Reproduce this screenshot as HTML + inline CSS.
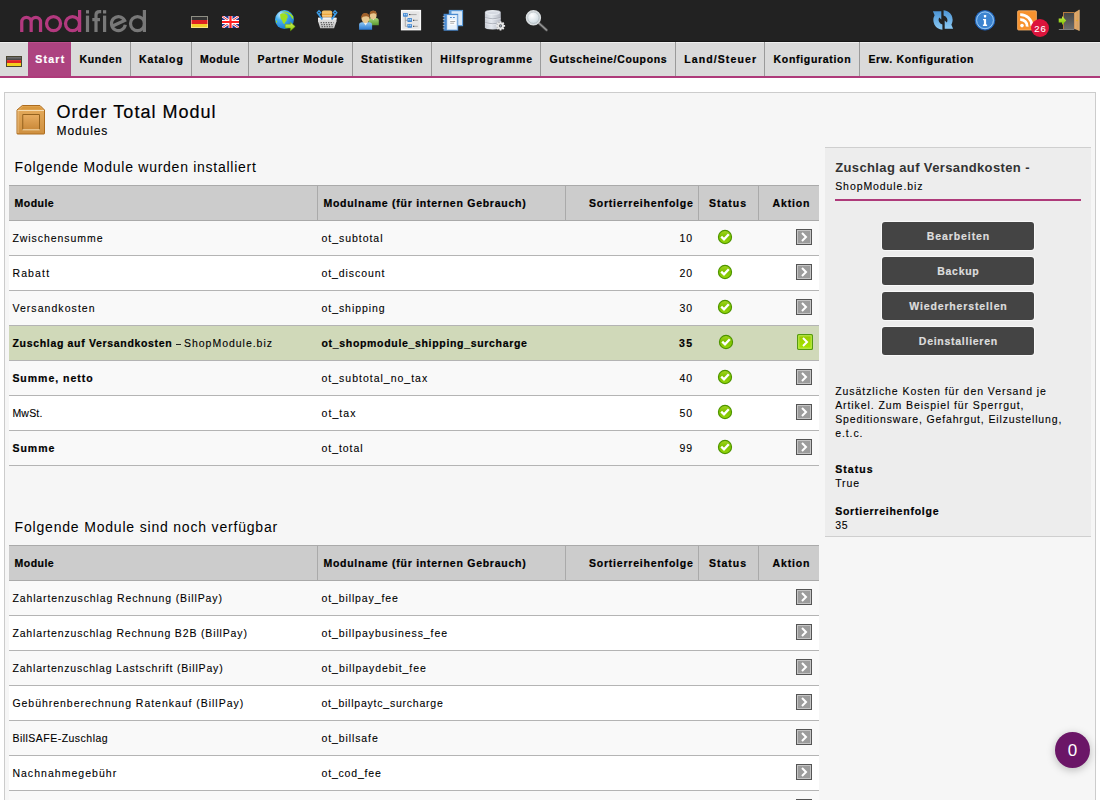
<!DOCTYPE html><html><head><meta charset="utf-8"><style>
html,body{margin:0;padding:0;width:1100px;height:800px;overflow:hidden;background:#fff;font-family:"Liberation Sans",sans-serif;}
.t{position:absolute;white-space:nowrap;}
.r{position:absolute;}
svg{position:absolute;}
</style></head><body>
<div class="r" style="left:0px;top:0px;width:1100px;height:42px;background:#222222;"></div>
<svg style="left:0;top:0" width="160" height="42" viewBox="0 0 160 42">
<g fill="none" stroke="#b3397f" stroke-width="3.25" stroke-linecap="butt">
<path d="M21.75,32 V22 A4.7,4.7 0 0 1 31.15,22 V32 M31.15,22 A4.7,4.7 0 0 1 40.55,22 V32"/>
<circle cx="53.55" cy="23.6" r="7"/>
<circle cx="72.5" cy="23.6" r="7"/>
<path d="M79.6,10 V32"/>
</g>
<g fill="none" stroke="#787878" stroke-width="3.2">
<path d="M87.5,15.6 V32"/><path d="M86,10.2 h3 v3.3 h-3z" fill="#7b7b7b" stroke="none"/>
<path d="M96,32 V15 Q96,11.6 99.5,11.6 H101.2"/><path d="M92.3,19.6 H100"/>
<path d="M104.6,15.6 V32"/><path d="M103,10.2 h3.2 v3.3 h-3.2z" fill="#7b7b7b" stroke="none"/>
<path d="M125.3,24.8 A6.95,6.95 0 1 1 124.6,20.4 L113.2,25.8"/>
<circle cx="137.5" cy="23.6" r="7"/>
<path d="M144.4,10 V32"/>
</g></svg>
<svg style="left:191px;top:16px" width="17" height="12" viewBox="0 0 17 12">
<rect x="0" y="0" width="17" height="4" fill="#333"/><rect x="0" y="4" width="17" height="4" fill="#dd2222"/><rect x="0" y="8" width="17" height="4" fill="#f2cf2a"/>
<rect x="0.5" y="0.5" width="16" height="11" fill="none" stroke="rgba(255,255,230,0.45)" stroke-width="1"/></svg>
<svg style="left:222px;top:16px" width="17" height="12" viewBox="0 0 17 12">
<rect width="17" height="12" fill="#24318f"/>
<path d="M0,0 L17,12 M17,0 L0,12" stroke="#fff" stroke-width="2.6"/>
<path d="M0,0 L17,12 M17,0 L0,12" stroke="#e33" stroke-width="1"/>
<path d="M8.5,0 V12 M0,6 H17" stroke="#fff" stroke-width="4"/>
<path d="M8.5,0 V12 M0,6 H17" stroke="#f22" stroke-width="2.2"/></svg>
<svg style="left:272px;top:7px" width="26" height="26" viewBox="0 0 26 26"><defs><radialGradient id="glb" cx="0.3" cy="0.25" r="0.8"><stop offset="0" stop-color="#c8ecff"/><stop offset="0.35" stop-color="#48b4f4"/><stop offset="1" stop-color="#1a78d0"/></radialGradient>
<linearGradient id="arw" x1="0" y1="0" x2="0" y2="1"><stop offset="0" stop-color="#d4f060"/><stop offset="1" stop-color="#88cc00"/></linearGradient></defs>
<circle cx="12.5" cy="12.6" r="9.5" fill="url(#glb)"/>
<path d="M8,7.6 L10,6.3 L13.6,6.6 L15.4,8.2 L15.8,10.4 L14.8,11.8 L14.6,13.8 L13.2,15.2 L12.6,17 L11,16.2 L10.2,13.8 L8.6,11.6 Z" fill="#9ee020"/>
<path d="M9.6,4.9 Q16,3.3 21.3,9.4 L21.2,12.6 L20.2,11.6 Q18.5,8 15.8,6.6 L12.8,5.6 Z" fill="#9ee020"/>
<path d="M3.8,13.6 L5,13.8 L5.2,15.6 L4.2,15.8 Z" fill="#9ee020"/>
<path d="M13.2,17.3 H18.5 V15.3 L23.2,19.6 L18.5,23.8 V21.1 H13.2 Z" fill="url(#arw)" stroke="#6aa800" stroke-width="0.5"/></svg>
<svg style="left:314px;top:7px" width="26" height="26" viewBox="0 0 26 26"><defs><linearGradient id="bsk" x1="0" y1="0" x2="0" y2="1"><stop offset="0" stop-color="#e6e6e6"/><stop offset="1" stop-color="#c2c2c2"/></linearGradient>
<linearGradient id="itm" x1="0" y1="0" x2="0" y2="1"><stop offset="0" stop-color="#f6c670"/><stop offset="0.55" stop-color="#e9a236"/><stop offset="1" stop-color="#f3c07a"/></linearGradient></defs>
<rect x="7.8" y="3.6" width="10.4" height="7" rx="2" fill="url(#itm)"/>
<path d="M8.3,6 h9.4 M8.3,8.4 h9.4" stroke="#fbe0b0" stroke-width="0.6"/>
<rect x="8.6" y="10.4" width="8.8" height="2.2" fill="#c9ccd6"/>
<path d="M4,10.8 H22.5 V14.2 L20.1,21.3 H6.2 L4,14.2 Z" fill="url(#bsk)"/>
<rect x="4" y="10.8" width="18.5" height="1.6" fill="#f2f2f2"/>
<path d="M6.6,15.6 h13 M7.2,17.6 h12 M7.6,19.6 h11" stroke="#5a5a5a" stroke-width="1.1" stroke-dasharray="1.3,1.2"/>
<path d="M4.2,6.5 L8.3,12.4 M21.8,6.5 L17.7,12.4" stroke="#3d9ee8" stroke-width="1.7"/>
<path d="M3.2,5.7 L5,3.8 L6.6,5.6 L4.9,7.6 Z M22.8,5.7 L21,3.8 L19.4,5.6 L21.1,7.6 Z" fill="none" stroke="#3d9ee8" stroke-width="1.3"/></svg>
<svg style="left:356px;top:7px" width="26" height="26" viewBox="0 0 26 26"><defs><linearGradient id="ub" x1="0" y1="0" x2="0" y2="1"><stop offset="0" stop-color="#8ec8f4"/><stop offset="1" stop-color="#2a78d0"/></linearGradient>
<linearGradient id="ug" x1="0" y1="0" x2="0" y2="1"><stop offset="0" stop-color="#a8d878"/><stop offset="1" stop-color="#5a9a30"/></linearGradient></defs>
<path d="M12.7,18.2 V13.5 Q12.7,11 15.5,11 H20 Q22.8,11 22.8,13.5 V18.2 Z" fill="url(#ug)"/>
<path d="M16,11 L17.3,13.2 L18.6,11 Z" fill="#eee"/>
<ellipse cx="17.2" cy="8" rx="3.4" ry="4.3" fill="#e8c890"/>
<path d="M13.6,8 Q13.3,3.7 17.2,3.7 Q21,3.7 20.8,8.5 Q20,6 17.5,6.2 Q14.5,6.2 13.6,8 Z" fill="#a0602a"/>
<path d="M3.1,22.8 V18 Q3.1,15.3 6,15.3 H13.2 Q16.1,15.3 16.1,18 V22.8 Z" fill="url(#ub)"/>
<path d="M7.4,15.3 L9.6,18.5 L11.8,15.3 Z" fill="#eee"/>
<ellipse cx="9.5" cy="11.3" rx="4" ry="4.8" fill="#e8c890"/>
<path d="M5.2,11.5 Q4.8,5.9 9.5,5.9 Q14,5.9 13.8,12 Q13,9 10,9.2 Q6.5,9.2 5.2,11.5 Z" fill="#a0602a"/></svg>
<svg style="left:398px;top:7px" width="26" height="26" viewBox="0 0 26 26"><rect x="2.9" y="2.9" width="20.2" height="20.5" fill="#f8f8f8"/>
<rect x="4.3" y="4.3" width="17.4" height="17.6" fill="#e6e6e6"/>
<path d="M7.3,9.6 V19.3 H9.6 M7.3,13.3 H9.6" stroke="#9a9a9a" stroke-width="0.8" fill="none"/>
<g fill="#3f84cf"><rect x="5" y="6" width="4.8" height="3.8" rx="0.7"/><rect x="9.4" y="11.1" width="4.6" height="3.9" rx="0.7"/><rect x="9.4" y="16.9" width="4.6" height="3.9" rx="0.7"/></g>
<g fill="#a8d0f4"><rect x="5.9" y="6.7" width="1.3" height="1.6"/><rect x="7.7" y="6.7" width="1.3" height="1.6"/><rect x="10.2" y="11.8" width="1.3" height="1.6"/><rect x="11.9" y="11.8" width="1.3" height="1.6"/><rect x="10.2" y="17.6" width="1.3" height="1.6"/><rect x="11.9" y="17.6" width="1.3" height="1.6"/></g>
<path d="M11,7.6 H18.6 M15,13.3 H19.8 M15,19.3 H19.8" stroke="#8a8a8a" stroke-width="0.7"/>
<path d="M11,7.6 H12.3 M15,13.3 H16.2 M15,19.3 H16.2" stroke="#333" stroke-width="0.9"/></svg>
<svg style="left:440px;top:7px" width="26" height="26" viewBox="0 0 26 26"><rect x="8.8" y="2.9" width="14.3" height="16.3" fill="#5b9ad8"/>
<rect x="11.5" y="4.2" width="10.5" height="13.8" fill="#d8e8f8"/>
<rect x="3.6" y="6.8" width="14.6" height="16.9" fill="#4a8ad0"/>
<rect x="6.8" y="8" width="10.6" height="14.8" fill="#cfe2f6"/>
<rect x="7.8" y="8.6" width="8.6" height="13.4" fill="#e8f2fc"/>
<rect x="9.7" y="13" width="6.1" height="4.8" fill="#fff"/>
<path d="M10.2,14.5 h5 M10.2,16.2 h4" stroke="#888" stroke-width="0.7"/>
<path d="M10,10.5 h1.8 M13,10.5 h1.8" stroke="#4a8ad0" stroke-width="1"/>
<path d="M2.8,9.5 h2 M2.8,12.5 h2 M2.8,15.5 h2 M2.8,18.5 h2 M2.8,21.2 h2" stroke="#bbb" stroke-width="0.8"/></svg>
<svg style="left:481px;top:7px" width="26" height="26" viewBox="0 0 26 26"><defs><linearGradient id="db" x1="0" y1="0" x2="1" y2="0"><stop offset="0" stop-color="#c6cad2"/><stop offset="0.4" stop-color="#e4e8ee"/><stop offset="1" stop-color="#b4b8c2"/></linearGradient></defs>
<path d="M3.9,5.5 Q3.9,3.1 11.85,3.1 Q19.8,3.1 19.8,5.5 V20.2 Q19.8,22.4 11.85,22.4 Q3.9,22.4 3.9,20.2 Z" fill="url(#db)"/>
<ellipse cx="11.85" cy="5.8" rx="6.8" ry="1.8" fill="#d6dae2" stroke="#f4f6fa" stroke-width="0.6"/>
<path d="M4.2,10.8 Q11.85,13 19.5,10.8 M4.2,15.8 Q11.85,18 19.5,15.8" stroke="#9aa0aa" stroke-width="0.8" fill="none"/>
<path d="M4.2,11.6 Q11.85,13.8 19.5,11.6 M4.2,16.6 Q11.85,18.8 19.5,16.6" stroke="#f0f2f6" stroke-width="0.6" fill="none"/>
<g transform="translate(19.5,18.8)"><circle r="3.6" fill="#e8e8e8" stroke="#777" stroke-width="0.5"/>
<path d="M0,-4.6 V4.6 M-4.6,0 H4.6 M-3.25,-3.25 L3.25,3.25 M-3.25,3.25 L3.25,-3.25" stroke="#e8e8e8" stroke-width="1.8"/>
<circle r="1.6" fill="#555"/><circle r="0.9" fill="#9ab"/></g></svg>
<svg style="left:523px;top:7px" width="26" height="26" viewBox="0 0 26 26"><defs><radialGradient id="gls" cx="0.4" cy="0.35" r="0.7"><stop offset="0" stop-color="#ffffff"/><stop offset="1" stop-color="#c4d2da"/></radialGradient></defs>
<path d="M16.3,16.5 L23.5,23" stroke="#555" stroke-width="3" stroke-linecap="round"/>
<path d="M16.3,16.5 L23.5,23" stroke="#999" stroke-width="1.2" stroke-linecap="round"/>
<circle cx="10.4" cy="10.7" r="7" fill="url(#gls)" stroke="#d8dcde" stroke-width="1.4"/>
<circle cx="10.4" cy="10.7" r="5.7" fill="none" stroke="#a8b0b4" stroke-width="0.6"/></svg>
<svg style="left:930px;top:7px" width="26" height="26" viewBox="0 0 26 26"><defs><linearGradient id="rf" x1="0" y1="0" x2="0" y2="1"><stop offset="0" stop-color="#4c94d4"/><stop offset="1" stop-color="#8ccaf4"/></linearGradient></defs>
<path d="M12.4,22.8 A9.8,9.8 0 0 1 4.6,8.2 L2.9,4.3 H11.3 V12.5 L9.2,10.4 A5,5 0 0 0 12.4,17.6 Z" fill="url(#rf)"/>
<path d="M13.6,3.2 A9.8,9.8 0 0 1 21.4,17.8 L23.1,21.7 H14.7 V13.5 L16.8,15.6 A5,5 0 0 0 13.6,8.4 Z" fill="url(#rf)"/></svg>
<svg style="left:972px;top:7px" width="26" height="26" viewBox="0 0 26 26"><circle cx="13" cy="13.3" r="9.8" fill="#3c84d0" stroke="#1d5fb8" stroke-width="0.9"/>
<circle cx="13" cy="13.3" r="8.4" fill="none" stroke="#9ccaf2" stroke-width="1"/>
<rect x="11.9" y="8" width="2.3" height="2.4" rx="0.6" fill="#fff"/>
<path d="M11,12 H14.1 V17.5 H15.1 V19 H10.9 V17.5 H11.9 V13.3 H11 Z" fill="#fff"/></svg>
<svg style="left:1014px;top:7px" width="26" height="26" viewBox="0 0 26 26"><rect x="3.6" y="3.8" width="18.8" height="19.2" rx="1" fill="#f7922e" stroke="#fbb46a" stroke-width="0.8"/>
<circle cx="8" cy="18.6" r="1.8" fill="#fff"/>
<path d="M6.2,12.6 A6.6,6.6 0 0 1 13.2,19.6 M6.2,7.6 A11.6,11.6 0 0 1 18,19" stroke="#fff" stroke-width="2.8" fill="none"/></svg>
<div class="r" style="left:1031px;top:19px;width:18px;height:18px;border-radius:50%;background:#dc143c;"></div>
<div class="t" style="left:1030.0px;width:20px;text-align:center;text-indent:0.9px;top:23.96px;font-size:9.5px;line-height:9.5px;letter-spacing:0.9px;color:#fff;-webkit-text-stroke:0.1px #fff;">26</div>
<svg style="left:1055px;top:7px" width="26" height="26" viewBox="0 0 26 26"><defs><linearGradient id="dr" x1="0" y1="0" x2="0" y2="1"><stop offset="0" stop-color="#464646"/><stop offset="1" stop-color="#6c6c6c"/></linearGradient>
<linearGradient id="dp" x1="0" y1="0" x2="1" y2="0"><stop offset="0" stop-color="#c89058"/><stop offset="0.3" stop-color="#e0aa6c"/><stop offset="1" stop-color="#d49a5a"/></linearGradient>
<linearGradient id="ar2" x1="0" y1="0" x2="0" y2="1"><stop offset="0" stop-color="#c8f048"/><stop offset="1" stop-color="#78c000"/></linearGradient></defs>
<rect x="3.8" y="22" width="15.5" height="0.9" fill="#8a8a8a"/>
<rect x="8" y="5" width="11.2" height="17" fill="#b47a40"/>
<rect x="9" y="6" width="10" height="16" fill="url(#dr)"/>
<path d="M19,5.8 L24.2,2.8 V23.8 L19,21.8 Z" fill="url(#dp)"/>
<path d="M24.2,2.8 V23.8" stroke="#f0c890" stroke-width="0.8"/>
<circle cx="22" cy="13.5" r="0.8" fill="#e8b020"/>
<path d="M3.7,11.4 H7 V9.1 L11.2,13.5 L7,17.9 V15.6 H3.7 Z" fill="url(#ar2)"/></svg>
<div class="r" style="left:0px;top:42px;width:1100px;height:34px;background:#dadada;"></div>
<div class="r" style="left:0px;top:41px;width:1100px;height:1px;background:#161616;"></div>
<div class="r" style="left:0px;top:42px;width:1100px;height:1px;background:#eeeeee;"></div>
<div class="r" style="left:0px;top:76px;width:1100px;height:2px;background:#ae3a7a;"></div>
<div class="r" style="left:28px;top:42px;width:43px;height:34px;background:#ad4380;"></div>
<div class="r" style="left:28px;top:42px;width:43px;height:1px;background:#bd4f8d;"></div>
<svg style="left:6px;top:56px" width="16" height="11" viewBox="0 0 16 11">
<defs><linearGradient id="nfg" x1="0" y1="0" x2="0" y2="1"><stop offset="0" stop-color="#fff" stop-opacity="0.35"/><stop offset="0.5" stop-color="#fff" stop-opacity="0"/></linearGradient></defs>
<rect x="0" y="0" width="16" height="11" fill="#4a4632"/>
<rect x="1" y="1" width="14" height="3" fill="#2a2a2a"/><rect x="1" y="4" width="14" height="3" fill="#e02424"/><rect x="1" y="7" width="14" height="3" fill="#f2d020"/>
<rect x="1" y="1" width="14" height="9" fill="url(#nfg)"/></svg>
<div class="r" style="left:130px;top:42px;width:1px;height:34px;background:#9a9a9a;"></div>
<div class="r" style="left:191px;top:42px;width:1px;height:34px;background:#9a9a9a;"></div>
<div class="r" style="left:248px;top:42px;width:1px;height:34px;background:#9a9a9a;"></div>
<div class="r" style="left:352px;top:42px;width:1px;height:34px;background:#9a9a9a;"></div>
<div class="r" style="left:431px;top:42px;width:1px;height:34px;background:#9a9a9a;"></div>
<div class="r" style="left:540px;top:42px;width:1px;height:34px;background:#9a9a9a;"></div>
<div class="r" style="left:675px;top:42px;width:1px;height:34px;background:#9a9a9a;"></div>
<div class="r" style="left:764px;top:42px;width:1px;height:34px;background:#9a9a9a;"></div>
<div class="r" style="left:859px;top:42px;width:1px;height:34px;background:#9a9a9a;"></div>
<div class="t" style="left:35.20px;top:54.11px;font-size:10.5px;line-height:10.5px;letter-spacing:1.27px;color:#fff;font-weight:bold;-webkit-text-stroke:0.2px #fff;">Start</div>
<div class="t" style="left:79.50px;top:54.11px;font-size:10.5px;line-height:10.5px;letter-spacing:0.624px;color:#000;font-weight:bold;-webkit-text-stroke:0.2px #000;">Kunden</div>
<div class="t" style="left:139.00px;top:54.11px;font-size:10.5px;line-height:10.5px;letter-spacing:0.883px;color:#000;font-weight:bold;-webkit-text-stroke:0.2px #000;">Katalog</div>
<div class="t" style="left:200.00px;top:54.11px;font-size:10.5px;line-height:10.5px;letter-spacing:0.552px;color:#000;font-weight:bold;-webkit-text-stroke:0.2px #000;">Module</div>
<div class="t" style="left:257.50px;top:54.11px;font-size:10.5px;line-height:10.5px;letter-spacing:0.752px;color:#000;font-weight:bold;-webkit-text-stroke:0.2px #000;">Partner Module</div>
<div class="t" style="left:361.00px;top:54.11px;font-size:10.5px;line-height:10.5px;letter-spacing:0.84px;color:#000;font-weight:bold;-webkit-text-stroke:0.2px #000;">Statistiken</div>
<div class="t" style="left:440.20px;top:54.11px;font-size:10.5px;line-height:10.5px;letter-spacing:0.868px;color:#000;font-weight:bold;-webkit-text-stroke:0.2px #000;">Hilfsprogramme</div>
<div class="t" style="left:549.60px;top:54.11px;font-size:10.5px;line-height:10.5px;letter-spacing:0.677px;color:#000;font-weight:bold;-webkit-text-stroke:0.2px #000;">Gutscheine/Coupons</div>
<div class="t" style="left:684.20px;top:54.11px;font-size:10.5px;line-height:10.5px;letter-spacing:1.112px;color:#000;font-weight:bold;-webkit-text-stroke:0.2px #000;">Land/Steuer</div>
<div class="t" style="left:773.60px;top:54.11px;font-size:10.5px;line-height:10.5px;letter-spacing:0.682px;color:#000;font-weight:bold;-webkit-text-stroke:0.2px #000;">Konfiguration</div>
<div class="t" style="left:868.40px;top:54.11px;font-size:10.5px;line-height:10.5px;letter-spacing:0.675px;color:#000;font-weight:bold;-webkit-text-stroke:0.2px #000;">Erw. Konfiguration</div>
<div class="r" style="left:4px;top:92px;width:1092px;height:708px;background:#f6f6f6;border:1px solid #cccccc;box-sizing:border-box;height:720px;"></div>
<svg style="left:16px;top:103px" width="32" height="34" viewBox="0 0 32 34">
<defs><linearGradient id="bx" x1="0" y1="0" x2="0" y2="1"><stop offset="0" stop-color="#e6ad5e"/><stop offset="1" stop-color="#cf9040"/></linearGradient>
<linearGradient id="bx2" x1="0" y1="0" x2="0" y2="1"><stop offset="0" stop-color="#e9ae62"/><stop offset="1" stop-color="#c98838"/></linearGradient></defs>
<path d="M6.3,2.5 H24 L28.5,7 V30.5 Q28.5,31 28,31 H1.5 Q1,31 1,30.5 V7 Z" fill="url(#bx)" stroke="#ad6c1e" stroke-width="1"/>
<path d="M7,3.5 H23.3 L26.5,6.5 H4 Z" fill="#d8983e"/>
<path d="M1.5,7.5 H28" stroke="#f6dcb0" stroke-width="1"/>
<path d="M2,8 V30" stroke="#f0c890" stroke-width="0.8"/>
<rect x="6.25" y="11" width="17.75" height="16" fill="url(#bx2)"/>
<path d="M6.75,27 V11.5 H23.5 V27" fill="none" stroke="#94621e" stroke-width="1"/>
<path d="M6.5,26.8 H23.75" stroke="#f6dcb0" stroke-width="1"/>
</svg>
<div class="t" style="left:56.50px;top:103.16px;font-size:18px;line-height:18px;letter-spacing:1.023px;color:#000;-webkit-text-stroke:0.2px #000;">Order Total Modul</div>
<div class="t" style="left:56.50px;top:125.04px;font-size:12px;line-height:12px;letter-spacing:0.907px;color:#000;-webkit-text-stroke:0.15px #000;">Modules</div>
<div class="t" style="left:14.60px;top:160.15px;font-size:14px;line-height:14px;letter-spacing:0.73px;color:#000;">Folgende Module wurden installiert</div>
<div class="r" style="left:9px;top:185px;width:810px;height:1px;background:#aaaaaa;"></div>
<div class="r" style="left:9px;top:186px;width:810px;height:34px;background:#cccccc;"></div>
<div class="r" style="left:9px;top:220px;width:810px;height:1px;background:#aaaaaa;"></div>
<div class="r" style="left:317px;top:186px;width:1px;height:34px;background:#aaaaaa;"></div>
<div class="r" style="left:565px;top:186px;width:1px;height:34px;background:#aaaaaa;"></div>
<div class="r" style="left:698px;top:186px;width:1px;height:34px;background:#aaaaaa;"></div>
<div class="r" style="left:758px;top:186px;width:1px;height:34px;background:#aaaaaa;"></div>
<div class="t" style="left:14.60px;top:198.11px;font-size:10.5px;line-height:10.5px;letter-spacing:0.452px;color:#000;font-weight:bold;-webkit-text-stroke:0.2px #000;">Module</div>
<div class="t" style="left:323.40px;top:198.11px;font-size:10.5px;line-height:10.5px;letter-spacing:0.743px;color:#000;font-weight:bold;-webkit-text-stroke:0.2px #000;">Modulname (für internen Gebrauch)</div>
<div class="t" style="right:406.30px;top:198.11px;font-size:10.5px;line-height:10.5px;letter-spacing:0.798px;color:#000;font-weight:bold;-webkit-text-stroke:0.2px #000;">Sortierreihenfolge</div>
<div class="t" style="left:709.00px;top:198.11px;font-size:10.5px;line-height:10.5px;letter-spacing:0.982px;color:#000;font-weight:bold;-webkit-text-stroke:0.2px #000;">Status</div>
<div class="t" style="right:289.65px;top:198.11px;font-size:10.5px;line-height:10.5px;letter-spacing:0.848px;color:#000;font-weight:bold;-webkit-text-stroke:0.2px #000;">Aktion</div>
<div class="r" style="left:9px;top:221px;width:810px;height:34px;background:#f9f9f9;"></div>
<div class="r" style="left:9px;top:255px;width:810px;height:1px;background:#b4b4b4;"></div>
<div class="t" style="left:12.40px;top:233.11px;font-size:10.5px;line-height:10.5px;letter-spacing:0.953px;color:#000;-webkit-text-stroke:0.1px #000;">Zwischensumme</div>
<div class="t" style="left:321.50px;top:233.11px;font-size:10.5px;line-height:10.5px;letter-spacing:0.963px;color:#000;-webkit-text-stroke:0.1px #000;">ot_subtotal</div>
<div class="t" style="right:407.08px;top:233.11px;font-size:10.5px;line-height:10.5px;letter-spacing:0.92px;color:#000;-webkit-text-stroke:0.1px #000;">10</div>
<svg style="left:717px;top:229px" width="16" height="16" viewBox="0 0 16 16">
<defs><linearGradient id="g1850" x1="0" y1="0" x2="0" y2="1"><stop offset="0" stop-color="#a6d822"/><stop offset="0.45" stop-color="#7cc000"/><stop offset="1" stop-color="#96d80a"/></linearGradient></defs>
<circle cx="8" cy="8" r="6.6" fill="url(#g1850)" stroke="#4e9400" stroke-width="1.1"/>
<path d="M4.2,7.6 L7,10.3 L11.8,5.2" fill="none" stroke="#fff" stroke-width="2.4"/></svg>
<svg style="left:796px;top:229px" width="16" height="16" viewBox="0 0 16 16">
<rect x="0.5" y="0.5" width="15" height="15" fill="#9c9c9c" stroke="#555" stroke-width="1"/>
<rect x="1.5" y="1.5" width="13" height="13" fill="none" stroke="#c4c4c4" stroke-width="1"/>
<path d="M6,4 L10,8 L6,12" fill="none" stroke="#fff" stroke-width="2"/></svg>
<div class="r" style="left:9px;top:256px;width:810px;height:34px;background:#ffffff;"></div>
<div class="r" style="left:9px;top:290px;width:810px;height:1px;background:#b4b4b4;"></div>
<div class="t" style="left:12.40px;top:268.11px;font-size:10.5px;line-height:10.5px;letter-spacing:1.152px;color:#000;-webkit-text-stroke:0.1px #000;">Rabatt</div>
<div class="t" style="left:321.50px;top:268.11px;font-size:10.5px;line-height:10.5px;letter-spacing:0.91px;color:#000;-webkit-text-stroke:0.1px #000;">ot_discount</div>
<div class="t" style="right:407.08px;top:268.11px;font-size:10.5px;line-height:10.5px;letter-spacing:0.92px;color:#000;-webkit-text-stroke:0.1px #000;">20</div>
<svg style="left:717px;top:264px" width="16" height="16" viewBox="0 0 16 16">
<defs><linearGradient id="g1851" x1="0" y1="0" x2="0" y2="1"><stop offset="0" stop-color="#a6d822"/><stop offset="0.45" stop-color="#7cc000"/><stop offset="1" stop-color="#96d80a"/></linearGradient></defs>
<circle cx="8" cy="8" r="6.6" fill="url(#g1851)" stroke="#4e9400" stroke-width="1.1"/>
<path d="M4.2,7.6 L7,10.3 L11.8,5.2" fill="none" stroke="#fff" stroke-width="2.4"/></svg>
<svg style="left:796px;top:264px" width="16" height="16" viewBox="0 0 16 16">
<rect x="0.5" y="0.5" width="15" height="15" fill="#9c9c9c" stroke="#555" stroke-width="1"/>
<rect x="1.5" y="1.5" width="13" height="13" fill="none" stroke="#c4c4c4" stroke-width="1"/>
<path d="M6,4 L10,8 L6,12" fill="none" stroke="#fff" stroke-width="2"/></svg>
<div class="r" style="left:9px;top:291px;width:810px;height:34px;background:#f9f9f9;"></div>
<div class="r" style="left:9px;top:325px;width:810px;height:1px;background:#b4b4b4;"></div>
<div class="t" style="left:12.40px;top:303.11px;font-size:10.5px;line-height:10.5px;letter-spacing:1.062px;color:#000;-webkit-text-stroke:0.1px #000;">Versandkosten</div>
<div class="t" style="left:321.50px;top:303.11px;font-size:10.5px;line-height:10.5px;letter-spacing:0.939px;color:#000;-webkit-text-stroke:0.1px #000;">ot_shipping</div>
<div class="t" style="right:407.08px;top:303.11px;font-size:10.5px;line-height:10.5px;letter-spacing:0.92px;color:#000;-webkit-text-stroke:0.1px #000;">30</div>
<svg style="left:717px;top:299px" width="16" height="16" viewBox="0 0 16 16">
<defs><linearGradient id="g1852" x1="0" y1="0" x2="0" y2="1"><stop offset="0" stop-color="#a6d822"/><stop offset="0.45" stop-color="#7cc000"/><stop offset="1" stop-color="#96d80a"/></linearGradient></defs>
<circle cx="8" cy="8" r="6.6" fill="url(#g1852)" stroke="#4e9400" stroke-width="1.1"/>
<path d="M4.2,7.6 L7,10.3 L11.8,5.2" fill="none" stroke="#fff" stroke-width="2.4"/></svg>
<svg style="left:796px;top:299px" width="16" height="16" viewBox="0 0 16 16">
<rect x="0.5" y="0.5" width="15" height="15" fill="#9c9c9c" stroke="#555" stroke-width="1"/>
<rect x="1.5" y="1.5" width="13" height="13" fill="none" stroke="#c4c4c4" stroke-width="1"/>
<path d="M6,4 L10,8 L6,12" fill="none" stroke="#fff" stroke-width="2"/></svg>
<div class="r" style="left:9px;top:326px;width:810px;height:34px;background:#d0d9b9;"></div>
<div class="r" style="left:9px;top:360px;width:810px;height:1px;background:#b4b4b4;"></div>
<div class="t" style="left:12.50px;top:338.11px;font-size:10.5px;line-height:10.5px;letter-spacing:0.673px;color:#000;font-weight:bold;-webkit-text-stroke:0.2px #000;">Zuschlag auf Versandkosten</div>
<div class="t" style="left:184.00px;top:338.11px;font-size:10.5px;line-height:10.5px;letter-spacing:0.977px;color:#000;-webkit-text-stroke:0.1px #000;">ShopModule.biz</div>
<div class="t" style="left:321.50px;top:338.11px;font-size:10.5px;line-height:10.5px;letter-spacing:0.679px;color:#000;font-weight:bold;-webkit-text-stroke:0.2px #000;">ot_shopmodule_shipping_surcharge</div>
<div class="r" style="left:176px;top:344px;width:5px;height:1.2px;background:#222;"></div>
<div class="t" style="right:406.68px;top:338.11px;font-size:10.5px;line-height:10.5px;letter-spacing:1.32px;color:#000;font-weight:bold;-webkit-text-stroke:0.2px #000;">35</div>
<svg style="left:718px;top:334px" width="16" height="16" viewBox="0 0 16 16">
<defs><linearGradient id="g1853" x1="0" y1="0" x2="0" y2="1"><stop offset="0" stop-color="#a6d822"/><stop offset="0.45" stop-color="#7cc000"/><stop offset="1" stop-color="#96d80a"/></linearGradient></defs>
<circle cx="8" cy="8" r="6.6" fill="url(#g1853)" stroke="#4e9400" stroke-width="1.1"/>
<path d="M4.2,7.6 L7,10.3 L11.8,5.2" fill="none" stroke="#fff" stroke-width="2.4"/></svg>
<svg style="left:797px;top:334px" width="16" height="16" viewBox="0 0 16 16">
<defs><linearGradient id="gb1853" x1="0" y1="0" x2="0" y2="1"><stop offset="0" stop-color="#98c800"/><stop offset="1" stop-color="#a8e800"/></linearGradient></defs>
<rect x="0.6" y="0.6" width="14.8" height="14.8" rx="1" fill="url(#gb1853)" stroke="#559a10" stroke-width="1.2"/>
<rect x="1.8" y="1.8" width="12.4" height="12.4" fill="none" stroke="#c4ee60" stroke-width="0.9"/>
<path d="M6,4 L10,8 L6,12" fill="none" stroke="#fff" stroke-width="2"/></svg>
<div class="r" style="left:9px;top:361px;width:810px;height:34px;background:#f9f9f9;"></div>
<div class="r" style="left:9px;top:395px;width:810px;height:1px;background:#b4b4b4;"></div>
<div class="t" style="left:12.40px;top:373.11px;font-size:10.5px;line-height:10.5px;letter-spacing:0.98px;color:#000;font-weight:bold;-webkit-text-stroke:0.2px #000;">Summe, netto</div>
<div class="t" style="left:321.50px;top:373.11px;font-size:10.5px;line-height:10.5px;letter-spacing:0.998px;color:#000;-webkit-text-stroke:0.1px #000;">ot_subtotal_no_tax</div>
<div class="t" style="right:407.08px;top:373.11px;font-size:10.5px;line-height:10.5px;letter-spacing:0.92px;color:#000;-webkit-text-stroke:0.1px #000;">40</div>
<svg style="left:717px;top:369px" width="16" height="16" viewBox="0 0 16 16">
<defs><linearGradient id="g1854" x1="0" y1="0" x2="0" y2="1"><stop offset="0" stop-color="#a6d822"/><stop offset="0.45" stop-color="#7cc000"/><stop offset="1" stop-color="#96d80a"/></linearGradient></defs>
<circle cx="8" cy="8" r="6.6" fill="url(#g1854)" stroke="#4e9400" stroke-width="1.1"/>
<path d="M4.2,7.6 L7,10.3 L11.8,5.2" fill="none" stroke="#fff" stroke-width="2.4"/></svg>
<svg style="left:796px;top:369px" width="16" height="16" viewBox="0 0 16 16">
<rect x="0.5" y="0.5" width="15" height="15" fill="#9c9c9c" stroke="#555" stroke-width="1"/>
<rect x="1.5" y="1.5" width="13" height="13" fill="none" stroke="#c4c4c4" stroke-width="1"/>
<path d="M6,4 L10,8 L6,12" fill="none" stroke="#fff" stroke-width="2"/></svg>
<div class="r" style="left:9px;top:396px;width:810px;height:34px;background:#ffffff;"></div>
<div class="r" style="left:9px;top:430px;width:810px;height:1px;background:#b4b4b4;"></div>
<div class="t" style="left:12.40px;top:408.11px;font-size:10.5px;line-height:10.5px;letter-spacing:0.207px;color:#000;-webkit-text-stroke:0.1px #000;">MwSt.</div>
<div class="t" style="left:321.50px;top:408.11px;font-size:10.5px;line-height:10.5px;letter-spacing:1.08px;color:#000;-webkit-text-stroke:0.1px #000;">ot_tax</div>
<div class="t" style="right:407.08px;top:408.11px;font-size:10.5px;line-height:10.5px;letter-spacing:0.92px;color:#000;-webkit-text-stroke:0.1px #000;">50</div>
<svg style="left:717px;top:404px" width="16" height="16" viewBox="0 0 16 16">
<defs><linearGradient id="g1855" x1="0" y1="0" x2="0" y2="1"><stop offset="0" stop-color="#a6d822"/><stop offset="0.45" stop-color="#7cc000"/><stop offset="1" stop-color="#96d80a"/></linearGradient></defs>
<circle cx="8" cy="8" r="6.6" fill="url(#g1855)" stroke="#4e9400" stroke-width="1.1"/>
<path d="M4.2,7.6 L7,10.3 L11.8,5.2" fill="none" stroke="#fff" stroke-width="2.4"/></svg>
<svg style="left:796px;top:404px" width="16" height="16" viewBox="0 0 16 16">
<rect x="0.5" y="0.5" width="15" height="15" fill="#9c9c9c" stroke="#555" stroke-width="1"/>
<rect x="1.5" y="1.5" width="13" height="13" fill="none" stroke="#c4c4c4" stroke-width="1"/>
<path d="M6,4 L10,8 L6,12" fill="none" stroke="#fff" stroke-width="2"/></svg>
<div class="r" style="left:9px;top:431px;width:810px;height:34px;background:#f9f9f9;"></div>
<div class="r" style="left:9px;top:465px;width:810px;height:1px;background:#b4b4b4;"></div>
<div class="t" style="left:12.40px;top:443.11px;font-size:10.5px;line-height:10.5px;letter-spacing:1.018px;color:#000;font-weight:bold;-webkit-text-stroke:0.2px #000;">Summe</div>
<div class="t" style="left:321.50px;top:443.11px;font-size:10.5px;line-height:10.5px;letter-spacing:0.951px;color:#000;-webkit-text-stroke:0.1px #000;">ot_total</div>
<div class="t" style="right:407.08px;top:443.11px;font-size:10.5px;line-height:10.5px;letter-spacing:0.92px;color:#000;-webkit-text-stroke:0.1px #000;">99</div>
<svg style="left:717px;top:439px" width="16" height="16" viewBox="0 0 16 16">
<defs><linearGradient id="g1856" x1="0" y1="0" x2="0" y2="1"><stop offset="0" stop-color="#a6d822"/><stop offset="0.45" stop-color="#7cc000"/><stop offset="1" stop-color="#96d80a"/></linearGradient></defs>
<circle cx="8" cy="8" r="6.6" fill="url(#g1856)" stroke="#4e9400" stroke-width="1.1"/>
<path d="M4.2,7.6 L7,10.3 L11.8,5.2" fill="none" stroke="#fff" stroke-width="2.4"/></svg>
<svg style="left:796px;top:439px" width="16" height="16" viewBox="0 0 16 16">
<rect x="0.5" y="0.5" width="15" height="15" fill="#9c9c9c" stroke="#555" stroke-width="1"/>
<rect x="1.5" y="1.5" width="13" height="13" fill="none" stroke="#c4c4c4" stroke-width="1"/>
<path d="M6,4 L10,8 L6,12" fill="none" stroke="#fff" stroke-width="2"/></svg>
<div class="t" style="left:14.60px;top:520.15px;font-size:14px;line-height:14px;letter-spacing:0.811px;color:#000;">Folgende Module sind noch verfügbar</div>
<div class="r" style="left:9px;top:545px;width:810px;height:1px;background:#aaaaaa;"></div>
<div class="r" style="left:9px;top:546px;width:810px;height:34px;background:#cccccc;"></div>
<div class="r" style="left:9px;top:580px;width:810px;height:1px;background:#aaaaaa;"></div>
<div class="r" style="left:317px;top:546px;width:1px;height:34px;background:#aaaaaa;"></div>
<div class="r" style="left:565px;top:546px;width:1px;height:34px;background:#aaaaaa;"></div>
<div class="r" style="left:698px;top:546px;width:1px;height:34px;background:#aaaaaa;"></div>
<div class="r" style="left:758px;top:546px;width:1px;height:34px;background:#aaaaaa;"></div>
<div class="t" style="left:14.60px;top:558.11px;font-size:10.5px;line-height:10.5px;letter-spacing:0.452px;color:#000;font-weight:bold;-webkit-text-stroke:0.2px #000;">Module</div>
<div class="t" style="left:323.40px;top:558.11px;font-size:10.5px;line-height:10.5px;letter-spacing:0.743px;color:#000;font-weight:bold;-webkit-text-stroke:0.2px #000;">Modulname (für internen Gebrauch)</div>
<div class="t" style="right:406.30px;top:558.11px;font-size:10.5px;line-height:10.5px;letter-spacing:0.798px;color:#000;font-weight:bold;-webkit-text-stroke:0.2px #000;">Sortierreihenfolge</div>
<div class="t" style="left:709.00px;top:558.11px;font-size:10.5px;line-height:10.5px;letter-spacing:0.982px;color:#000;font-weight:bold;-webkit-text-stroke:0.2px #000;">Status</div>
<div class="t" style="right:289.65px;top:558.11px;font-size:10.5px;line-height:10.5px;letter-spacing:0.848px;color:#000;font-weight:bold;-webkit-text-stroke:0.2px #000;">Aktion</div>
<div class="r" style="left:9px;top:581px;width:810px;height:34px;background:#f9f9f9;"></div>
<div class="r" style="left:9px;top:615px;width:810px;height:1px;background:#b4b4b4;"></div>
<div class="t" style="left:12.40px;top:593.11px;font-size:10.5px;line-height:10.5px;letter-spacing:0.883px;color:#000;-webkit-text-stroke:0.1px #000;">Zahlartenzuschlag Rechnung (BillPay)</div>
<div class="t" style="left:321.50px;top:593.11px;font-size:10.5px;line-height:10.5px;letter-spacing:0.881px;color:#000;-webkit-text-stroke:0.1px #000;">ot_billpay_fee</div>
<svg style="left:796px;top:589px" width="16" height="16" viewBox="0 0 16 16">
<rect x="0.5" y="0.5" width="15" height="15" fill="#9c9c9c" stroke="#555" stroke-width="1"/>
<rect x="1.5" y="1.5" width="13" height="13" fill="none" stroke="#c4c4c4" stroke-width="1"/>
<path d="M6,4 L10,8 L6,12" fill="none" stroke="#fff" stroke-width="2"/></svg>
<div class="r" style="left:9px;top:616px;width:810px;height:34px;background:#ffffff;"></div>
<div class="r" style="left:9px;top:650px;width:810px;height:1px;background:#b4b4b4;"></div>
<div class="t" style="left:12.40px;top:628.11px;font-size:10.5px;line-height:10.5px;letter-spacing:0.85px;color:#000;-webkit-text-stroke:0.1px #000;">Zahlartenzuschlag Rechnung B2B (BillPay)</div>
<div class="t" style="left:321.50px;top:628.11px;font-size:10.5px;line-height:10.5px;letter-spacing:0.917px;color:#000;-webkit-text-stroke:0.1px #000;">ot_billpaybusiness_fee</div>
<svg style="left:796px;top:624px" width="16" height="16" viewBox="0 0 16 16">
<rect x="0.5" y="0.5" width="15" height="15" fill="#9c9c9c" stroke="#555" stroke-width="1"/>
<rect x="1.5" y="1.5" width="13" height="13" fill="none" stroke="#c4c4c4" stroke-width="1"/>
<path d="M6,4 L10,8 L6,12" fill="none" stroke="#fff" stroke-width="2"/></svg>
<div class="r" style="left:9px;top:651px;width:810px;height:34px;background:#f9f9f9;"></div>
<div class="r" style="left:9px;top:685px;width:810px;height:1px;background:#b4b4b4;"></div>
<div class="t" style="left:12.40px;top:663.11px;font-size:10.5px;line-height:10.5px;letter-spacing:0.834px;color:#000;-webkit-text-stroke:0.1px #000;">Zahlartenzuschlag Lastschrift (BillPay)</div>
<div class="t" style="left:321.50px;top:663.11px;font-size:10.5px;line-height:10.5px;letter-spacing:0.927px;color:#000;-webkit-text-stroke:0.1px #000;">ot_billpaydebit_fee</div>
<svg style="left:796px;top:659px" width="16" height="16" viewBox="0 0 16 16">
<rect x="0.5" y="0.5" width="15" height="15" fill="#9c9c9c" stroke="#555" stroke-width="1"/>
<rect x="1.5" y="1.5" width="13" height="13" fill="none" stroke="#c4c4c4" stroke-width="1"/>
<path d="M6,4 L10,8 L6,12" fill="none" stroke="#fff" stroke-width="2"/></svg>
<div class="r" style="left:9px;top:686px;width:810px;height:34px;background:#ffffff;"></div>
<div class="r" style="left:9px;top:720px;width:810px;height:1px;background:#b4b4b4;"></div>
<div class="t" style="left:12.40px;top:698.11px;font-size:10.5px;line-height:10.5px;letter-spacing:0.968px;color:#000;-webkit-text-stroke:0.1px #000;">Gebührenberechnung Ratenkauf (BillPay)</div>
<div class="t" style="left:321.50px;top:698.11px;font-size:10.5px;line-height:10.5px;letter-spacing:0.771px;color:#000;-webkit-text-stroke:0.1px #000;">ot_billpaytc_surcharge</div>
<svg style="left:796px;top:694px" width="16" height="16" viewBox="0 0 16 16">
<rect x="0.5" y="0.5" width="15" height="15" fill="#9c9c9c" stroke="#555" stroke-width="1"/>
<rect x="1.5" y="1.5" width="13" height="13" fill="none" stroke="#c4c4c4" stroke-width="1"/>
<path d="M6,4 L10,8 L6,12" fill="none" stroke="#fff" stroke-width="2"/></svg>
<div class="r" style="left:9px;top:721px;width:810px;height:34px;background:#f9f9f9;"></div>
<div class="r" style="left:9px;top:755px;width:810px;height:1px;background:#b4b4b4;"></div>
<div class="t" style="left:12.40px;top:733.11px;font-size:10.5px;line-height:10.5px;letter-spacing:0.482px;color:#000;-webkit-text-stroke:0.1px #000;">BillSAFE-Zuschlag</div>
<div class="t" style="left:321.50px;top:733.11px;font-size:10.5px;line-height:10.5px;letter-spacing:0.897px;color:#000;-webkit-text-stroke:0.1px #000;">ot_billsafe</div>
<svg style="left:796px;top:729px" width="16" height="16" viewBox="0 0 16 16">
<rect x="0.5" y="0.5" width="15" height="15" fill="#9c9c9c" stroke="#555" stroke-width="1"/>
<rect x="1.5" y="1.5" width="13" height="13" fill="none" stroke="#c4c4c4" stroke-width="1"/>
<path d="M6,4 L10,8 L6,12" fill="none" stroke="#fff" stroke-width="2"/></svg>
<div class="r" style="left:9px;top:756px;width:810px;height:34px;background:#ffffff;"></div>
<div class="r" style="left:9px;top:790px;width:810px;height:1px;background:#b4b4b4;"></div>
<div class="t" style="left:12.40px;top:768.11px;font-size:10.5px;line-height:10.5px;letter-spacing:1.031px;color:#000;-webkit-text-stroke:0.1px #000;">Nachnahmegebühr</div>
<div class="t" style="left:321.50px;top:768.11px;font-size:10.5px;line-height:10.5px;letter-spacing:0.81px;color:#000;-webkit-text-stroke:0.1px #000;">ot_cod_fee</div>
<svg style="left:796px;top:764px" width="16" height="16" viewBox="0 0 16 16">
<rect x="0.5" y="0.5" width="15" height="15" fill="#9c9c9c" stroke="#555" stroke-width="1"/>
<rect x="1.5" y="1.5" width="13" height="13" fill="none" stroke="#c4c4c4" stroke-width="1"/>
<path d="M6,4 L10,8 L6,12" fill="none" stroke="#fff" stroke-width="2"/></svg>
<div class="r" style="left:9px;top:791px;width:810px;height:34px;background:#f9f9f9;"></div>
<div class="r" style="left:9px;top:825px;width:810px;height:1px;background:#b4b4b4;"></div>
<svg style="left:796px;top:799px" width="16" height="16" viewBox="0 0 16 16">
<rect x="0.5" y="0.5" width="15" height="15" fill="#9c9c9c" stroke="#555" stroke-width="1"/>
<rect x="1.5" y="1.5" width="13" height="13" fill="none" stroke="#c4c4c4" stroke-width="1"/>
<path d="M6,4 L10,8 L6,12" fill="none" stroke="#fff" stroke-width="2"/></svg>
<div class="r" style="left:825px;top:147px;width:266px;height:390px;background:#ededed;border-top:1px solid #cfcfcf;border-bottom:1px solid #cfcfcf;box-sizing:border-box;"></div>
<div class="t" style="left:835.20px;top:161.00px;font-size:13px;line-height:13px;letter-spacing:0.373px;color:#333;font-weight:bold;">Zuschlag auf Versandkosten -</div>
<div class="t" style="left:835.20px;top:181.11px;font-size:10.5px;line-height:10.5px;letter-spacing:0.923px;color:#000;-webkit-text-stroke:0.1px #000;">ShopModule.biz</div>
<div class="r" style="left:835px;top:199px;width:246px;height:2px;background:#ae3a7a;"></div>
<div class="r" style="left:882px;top:222px;width:152px;height:28px;background:#444444;border-radius:3px;box-shadow:0 0 0 1px #f8f8f8;"></div>
<div class="t" style="left:882.0px;width:152px;text-align:center;text-indent:0.914px;top:231.11px;font-size:10.5px;line-height:10.5px;letter-spacing:0.914px;color:#dddddd;font-weight:bold;-webkit-text-stroke:0.2px #dddddd;">Bearbeiten</div>
<div class="r" style="left:882px;top:257px;width:152px;height:28px;background:#444444;border-radius:3px;box-shadow:0 0 0 1px #f8f8f8;"></div>
<div class="t" style="left:882.0px;width:152px;text-align:center;text-indent:0.674px;top:266.11px;font-size:10.5px;line-height:10.5px;letter-spacing:0.674px;color:#dddddd;font-weight:bold;-webkit-text-stroke:0.2px #dddddd;">Backup</div>
<div class="r" style="left:882px;top:292px;width:152px;height:28px;background:#444444;border-radius:3px;box-shadow:0 0 0 1px #f8f8f8;"></div>
<div class="t" style="left:882.0px;width:152px;text-align:center;text-indent:0.872px;top:301.11px;font-size:10.5px;line-height:10.5px;letter-spacing:0.872px;color:#dddddd;font-weight:bold;-webkit-text-stroke:0.2px #dddddd;">Wiederherstellen</div>
<div class="r" style="left:882px;top:327px;width:152px;height:28px;background:#444444;border-radius:3px;box-shadow:0 0 0 1px #f8f8f8;"></div>
<div class="t" style="left:882.0px;width:152px;text-align:center;text-indent:0.726px;top:336.11px;font-size:10.5px;line-height:10.5px;letter-spacing:0.726px;color:#dddddd;font-weight:bold;-webkit-text-stroke:0.2px #dddddd;">Deinstallieren</div>
<div class="t" style="left:835.20px;top:386.11px;font-size:10.5px;line-height:10.5px;letter-spacing:0.94px;color:#000;-webkit-text-stroke:0.1px #000;">Zusätzliche Kosten für den Versand je</div>
<div class="t" style="left:835.20px;top:400.11px;font-size:10.5px;line-height:10.5px;letter-spacing:0.919px;color:#000;-webkit-text-stroke:0.1px #000;">Artikel. Zum Beispiel für Sperrgut,</div>
<div class="t" style="left:835.20px;top:414.11px;font-size:10.5px;line-height:10.5px;letter-spacing:0.854px;color:#000;-webkit-text-stroke:0.1px #000;">Speditionsware, Gefahrgut, Eilzustellung,</div>
<div class="t" style="left:835.20px;top:428.11px;font-size:10.5px;line-height:10.5px;letter-spacing:0.908px;color:#000;-webkit-text-stroke:0.1px #000;">e.t.c.</div>
<div class="t" style="left:835.20px;top:464.11px;font-size:10.5px;line-height:10.5px;letter-spacing:1.062px;color:#000;font-weight:bold;-webkit-text-stroke:0.2px #000;">Status</div>
<div class="t" style="left:835.20px;top:478.11px;font-size:10.5px;line-height:10.5px;letter-spacing:0.9px;color:#000;-webkit-text-stroke:0.1px #000;">True</div>
<div class="t" style="left:835.20px;top:506.11px;font-size:10.5px;line-height:10.5px;letter-spacing:0.757px;color:#000;font-weight:bold;-webkit-text-stroke:0.2px #000;">Sortierreihenfolge</div>
<div class="t" style="left:835.20px;top:520.11px;font-size:10.5px;line-height:10.5px;letter-spacing:0.8px;color:#000;-webkit-text-stroke:0.1px #000;">35</div>
<div class="r" style="left:1055px;top:732px;width:35px;height:36px;border-radius:50%;background:#6b1667;box-shadow:0 2px 8px rgba(0,0,0,0.25);"></div>
<div class="t" style="left:1062.5px;width:20px;text-align:center;text-indent:0px;top:741.61px;font-size:17px;line-height:17px;letter-spacing:0px;color:#fff;">0</div>
</body></html>
